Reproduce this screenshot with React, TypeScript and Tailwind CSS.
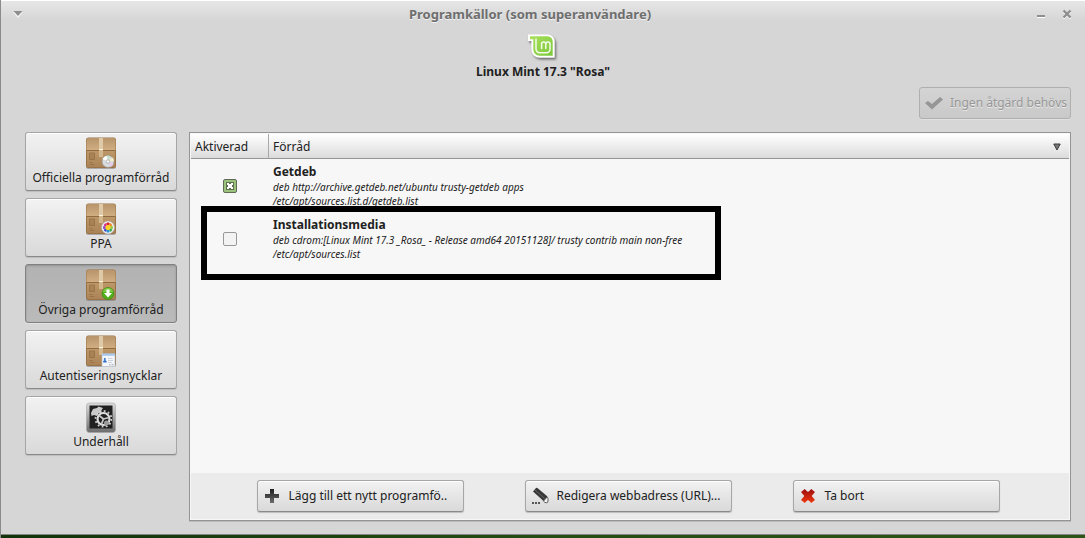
import { useState, type ReactNode } from 'react'
import clsx from 'clsx'

type Badge = 'disc' | 'ppa' | 'download' | 'card'

type Repository = {
  id: string
  name: string
  source: string
  file: string
  highlighted?: boolean
}

const TABS: { label: string; badge?: Badge }[] = [
  { label: 'Officiella programförråd', badge: 'disc' },
  { label: 'PPA', badge: 'ppa' },
  { label: 'Övriga programförråd', badge: 'download' },
  { label: 'Autentiseringsnycklar', badge: 'card' },
  { label: 'Underhåll' },
]

const REPOSITORIES: Repository[] = [
  {
    id: 'getdeb',
    name: 'Getdeb',
    source: 'deb http://archive.getdeb.net/ubuntu trusty-getdeb apps',
    file: '/etc/apt/sources.list.d/getdeb.list',
  },
  {
    id: 'cdrom',
    name: 'Installationsmedia',
    source: 'deb cdrom:[Linux Mint 17.3 _Rosa_ - Release amd64 20151128]/ trusty contrib main non-free',
    file: '/etc/apt/sources.list',
    highlighted: true,
  },
]

const PPA_COLORS = ['#d62b2b', '#ef8a1c', '#8cc63f', '#2fa84f', '#2b8fd6', '#3b4fc4', '#8a3bc4', '#d62b8a']

const RAISED =
  'rounded-[3px] border border-[#a6a6a6] border-b-[#8a8a8a] bg-linear-to-b from-[#f2f2f2] to-[#d9d9d9] shadow-[0_1px_1px_#bcbcbc,inset_0_1px_0_#ffffff]'

function MintLogo() {
  return (
    <svg width="32" height="32" viewBox="0 0 32 32" aria-hidden="true">
      <defs>
        <linearGradient id="mint" x1="0" y1="0" x2="1" y2="1">
          <stop offset="0" stopColor="#a9e05c" />
          <stop offset="1" stopColor="#7cc83c" />
        </linearGradient>
        <filter id="mint-shadow" x="-20%" y="-20%" width="150%" height="150%">
          <feDropShadow dx="1.500" dy="2" stdDeviation="1.200" floodColor="#000" floodOpacity="0.5" />
        </filter>
      </defs>
      <path
        filter="url(#mint-shadow)"
        fill="#fff"
        d="M1 3.500h19.500a7 7 0 0 1 7 7v16H12.500a8 8 0 0 1-8-8V10H1z"
      />
      <path fill="url(#mint)" d="M3 5.300h17.500a5.200 5.200 0 0 1 5.200 5.200v14.200H12.500a6.200 6.200 0 0 1-6.200-6.200V8.300H3z" />
      <path
        fill="none"
        stroke="#f4fbe9"
        strokeWidth="1.500"
        strokeLinecap="round"
        d="M9 8v10a3.700 3.700 0 0 0 3.700 3.700h6.800a3.500 3.500 0 0 0 3.500-3.500v-5a2.100 2.100 0 0 0-4.200 0V17.500M18.800 13.200a2.100 2.100 0 0 0-4.200 0V17.500"
      />
    </svg>
  )
}

function PackageBadge({ badge }: { badge: Badge }) {
  if (badge === 'disc') {
    return (
      <g>
        <circle cx="23" cy="24.500" r="6" fill="#d9dcdc" stroke="#8f8f8f" strokeWidth=".6" />
        <path d="M23 24.500 17.500 22a6 6 0 0 1 4-3.300z" fill="#fff" />
        <path d="M23 24.500 22 18.600a6 6 0 0 1 3 .3z" fill="#c5e3c8" />
        <path d="M23 24.500 28.500 27a6 6 0 0 1-3 2.900z" fill="#e6c9ea" />
        <path d="M23 24.500 29 24a6 6 0 0 0-1.500-3.500z" fill="#f4eec4" />
        <circle cx="23" cy="24.500" r="1.700" fill="#fff" stroke="#a5a5a5" strokeWidth=".8" />
      </g>
    )
  }
  if (badge === 'ppa') {
    return (
      <g>
        <circle cx="23" cy="24.500" r="6.500" fill="#eef0f2" stroke="#a9a9a9" strokeWidth=".5" />
        {PPA_COLORS.map((color, i) => (
          <path
            key={color}
            d="M21.500 20.300 22 19.600h2l.5.700-.5 2h-2z"
            fill={color}
            transform={`rotate(${i * 45} 23 24.500)`}
          />
        ))}
        <circle cx="23" cy="24.500" r="2.500" fill="#ffd21f" />
      </g>
    )
  }
  if (badge === 'download') {
    return (
      <g>
        <circle cx="23" cy="24.500" r="6" fill="#53ae1c" stroke="#3d8a12" strokeWidth=".7" />
        <path d="M17.800 23a5.400 5.400 0 0 1 10.400 0z" fill="#7dcc45" />
        <path d="M21.500 20.500h3V24H27l-4 4.500L19 24h2.500z" fill="#fff" />
      </g>
    )
  }
  return (
    <g>
      <path d="M17 19h13v12.500H17z" fill="#f3f6fa" stroke="#b9c3d1" strokeWidth=".6" />
      <path d="M17 18.500h13v2.300H17z" fill="#a9c8ee" />
      <circle cx="19.800" cy="24" r="1" fill="#2f6fc9" />
      <path d="M18.200 27.500v-1.300q1.600-2.200 3.300 0v1.300z" fill="#2f6fc9" />
      <path d="M23 23.500h4.500M23 25.500h5M23 27.500h4" stroke="#c4c8cf" strokeWidth=".8" />
      <path d="M24 29.800h5" stroke="#9ea3ab" strokeWidth="1" strokeDasharray="1 .5" />
    </g>
  )
}

function PackageIcon({ badge }: { badge: Badge }) {
  return (
    <svg width="32" height="32" viewBox="0 0 32 32" aria-hidden="true">
      <defs>
        <linearGradient id={`lid-${badge}`} x1="0" y1="0" x2="0" y2="1">
          <stop offset="0" stopColor="#b8946a" />
          <stop offset="1" stopColor="#d0ae82" />
        </linearGradient>
        <linearGradient id={`box-${badge}`} x1="0" y1="0" x2="0" y2="1">
          <stop offset="0" stopColor="#be9868" />
          <stop offset="1" stopColor="#ab8357" />
        </linearGradient>
      </defs>
      <rect x="1" y="1.500" width="30" height="30.500" rx="2.500" fill="#6f6f6f" opacity=".5" />
      <rect x="1" y=".5" width="30" height="30.500" rx="2.500" fill="#9a7448" />
      <path d="M3.500 1h25q2 0 2 1.500V13h-29V2.500Q1.500 1 3.500 1z" fill={`url(#lid-${badge})`} />
      <path d="M2 13.500h28v15q0 1.500-1.500 1.500h-25Q2 30 2 28.500z" fill={`url(#box-${badge})`} />
      <path d="M2 13.500h28" stroke="#8f6b42" />
      <path d="M14 1h4v11.500h-4z" fill="#dfc9a6" />
      <path d="M14 12.500h4v7.500h-4z" fill="#d3b88f" />
      <path d="M14 12.500h4" stroke="#fff4dc" />
      <path d="M4.500 22.500V16h5v6.500zM6 22v-5.500M8 22v-5.500" fill="none" stroke="#936c42" strokeWidth=".8" />
      <path d="M4.500 25.500h3M4.500 27.500h5" stroke="#936c42" strokeWidth=".7" />
      <PackageBadge badge={badge} />
    </svg>
  )
}

function MaintenanceIcon() {
  return (
    <svg width="32" height="32" viewBox="0 0 32 32" aria-hidden="true">
      <defs>
        <linearGradient id="frame" x1="0" y1="0" x2="0" y2="1">
          <stop offset="0" stopColor="#dcdcdc" />
          <stop offset="1" stopColor="#6c6c6c" />
        </linearGradient>
        <clipPath id="frame-clip">
          <path d="M5 4.500h22v22H5z" />
        </clipPath>
      </defs>
      <rect x="1.500" y="2" width="29" height="29.500" rx="3" fill="url(#frame)" stroke="#a5a5a5" strokeWidth=".6" />
      <path d="M4.500 4.500h23v23h-23z" fill="#202020" />
      <g clipPath="url(#frame-clip)" fill="none">
        <path fill="#c9c9c9" d="m6 12 2-4 4-1 1.500-1.500L18 7l-2 3 1 1.500-4 1-1 2.500-3-1-2.500 1z" />
        <circle cx="18.500" cy="18" r="6" stroke="#dedede" strokeWidth="2.200" />
        <circle cx="18.500" cy="18" r="8" stroke="#d0d0d0" strokeWidth="1.800" strokeDasharray="1.800 2.390" />
        <path d="m18.500 18-4.500-3.500M18.500 18l5.500-1.500M18.500 18l-2 5" stroke="#c6c6c6" strokeWidth="1.800" />
        <circle cx="21.500" cy="22" r="2.500" fill="#9c9c9c" />
      </g>
    </svg>
  )
}

function PlusIcon() {
  return (
    <svg width="16" height="16" viewBox="0 0 16 16" aria-hidden="true">
      <defs>
        <linearGradient id="plus" x1="0" y1="0" x2="0" y2="1">
          <stop offset="0" stopColor="#1c1c1c" />
          <stop offset="1" stopColor="#6c6c6c" />
        </linearGradient>
      </defs>
      <path fill="url(#plus)" d="M6 1h4v5h5v4h-5v5H6v-5H1V6h5z" />
    </svg>
  )
}

function PencilIcon() {
  return (
    <svg width="18" height="18" viewBox="0 0 18 18" aria-hidden="true">
      <path fill="#383838" d="M1 4.500 4 1Q5 .5 6 1.500L15.500 9.500 11.500 14z" />
      <path stroke="#777" strokeWidth=".7" d="m3 3 9.500 8.500" />
      <path fill="#f6f6f6" stroke="#4a4a4a" strokeWidth=".9" d="M11.500 14.200 15 10q1.500 1 1 4 0 1.800-1.500 1.800-1.800 0-3-1.600z" />
      <path fill="#555" d="M0 15h2v2H0zm3 0h2v2H3zm3 0h2v2H6z" />
    </svg>
  )
}

function DeleteIcon() {
  return (
    <svg width="16" height="16" viewBox="0 0 16 16" aria-hidden="true">
      <defs>
        <linearGradient id="delete" x1="0" y1="0" x2="0" y2="1">
          <stop offset="0" stopColor="#9c0b0b" />
          <stop offset="1" stopColor="#f03a10" />
        </linearGradient>
      </defs>
      <path
        fill="url(#delete)"
        d="M4.500 1 8 4l3.500-3L13 2.500l2 1.500-3.300 4L15 12l-2 1.500-1.500 1.500L8 12l-3.500 3L3 13.500 1 12l3.300-4L1 4l2-1.500z"
      />
    </svg>
  )
}

function TitleBar() {
  return (
    <header className="flex h-[27px] items-center border-t border-white bg-linear-to-b from-[#e6e6e6] to-[#d6d6d6] to-75% pr-[13px] pl-[11px]">
      <button type="button" aria-label="Fönstermeny" className="w-12">
        <svg width="12" height="8" viewBox="0 0 12 8" aria-hidden="true">
          <path fill="#f4f4f4" d="M1 2h10L6 8z" />
          <path fill="#8e8e8e" d="M1.500 1h9L6 6z" />
        </svg>
      </button>
      <h1 className="flex-1 text-center text-[13px] leading-4 font-bold text-[#6e6e6e] [text-shadow:0_1px_0_#f2f2f2]">
        Programkällor (som superanvändare)
      </h1>
      <div className="flex w-[72px] items-center justify-end gap-4">
        <button type="button" aria-label="Minimera">
          <svg width="10" height="10" viewBox="0 0 10 10" aria-hidden="true">
            <path fill="#fff" d="M1 8h8v1H1z" />
            <path fill="#8e8e8e" d="M1 6h8v2H1z" />
          </svg>
        </button>
        <button type="button" aria-label="Stäng">
          <svg width="10" height="10" viewBox="0 0 10 10" fill="none" strokeWidth="2.400" aria-hidden="true">
            <path stroke="#f6f6f6" d="m1.500 2.500 7 7m0-7-7 7" />
            <path stroke="#8e8e8e" d="m1.500 1.500 7 7m0-7-7 7" />
          </svg>
        </button>
      </div>
    </header>
  )
}

function ActionButton({ icon, children }: { icon: ReactNode; children: ReactNode }) {
  return (
    <button type="button" className={clsx(RAISED, 'flex h-8 w-[207px] items-center px-1.5 whitespace-nowrap')}>
      <span className="w-[25px]">{icon}</span>
      {children}
    </button>
  )
}

function RepositoryRow({ repo, enabled, onToggle }: { repo: Repository; enabled: boolean; onToggle: () => void }) {
  return (
    <tr className="relative">
      <td className="py-1">
        <div className="relative mx-auto size-3.5">
          <input
            id={repo.id}
            type="checkbox"
            checked={enabled}
            onChange={onToggle}
            className="block size-3.5 appearance-none rounded-[2px] border border-[#999999] bg-[#f3f3f3] checked:border-[#5f6b55] checked:bg-[#9bc37c]"
          />
          {enabled && (
            <svg className="pointer-events-none absolute inset-0" width="14" height="14" viewBox="0 0 14 14" aria-hidden="true">
              <path fill="#5f7350" d="M3 3h8v8H3z" />
              <path fill="#fff" d="M4 4h2v1h2V4h2v2H9v2h1v2H8V9H6v1H4V8h1V6H4z" />
            </svg>
          )}
        </div>
      </td>
      <td className="px-1 py-1">
        <label htmlFor={repo.id} className="block leading-[17px] font-bold">
          {repo.name}
        </label>
        <p className="text-[10px] leading-[14px] italic">{repo.source}</p>
        <p className="text-[10px] leading-[14px] italic">{repo.file}</p>
        {repo.highlighted && (
          <div className="pointer-events-none absolute -top-1.5 left-2.5 h-[74px] w-[520px] border-6 border-black" />
        )}
      </td>
    </tr>
  )
}

export default function App() {
  const [tab, setTab] = useState(2)
  const [enabled, setEnabled] = useState<string[]>(['getdeb'])

  const toggle = (id: string) =>
    setEnabled((ids) => (ids.includes(id) ? ids.filter((other) => other !== id) : [...ids, id]))

  return (
    <div className="flex min-h-screen flex-col border-l border-[#8b8b8b] bg-[#d6d6d6] font-['Noto_Sans',sans-serif] text-xs text-[#212121]">
      <TitleBar />

      <div className="flex flex-col items-center pt-1">
        <MintLogo />
        <h2 className="leading-[18px] font-bold">Linux Mint 17.3 "Rosa"</h2>
      </div>

      <div className="flex justify-end px-3.5 pt-1.5">
        <button
          type="button"
          disabled
          className="flex h-8 items-center gap-[7px] rounded-[3px] border border-[#afafaf] bg-linear-to-b from-[#d4d4d4] to-[#c9c9c9] px-[3px] whitespace-nowrap text-[#979797] shadow-[0_1px_0_#e0e0e0] [text-shadow:0_1px_0_#e8e8e8]"
        >
          <svg width="20" height="16" viewBox="0 0 20 16" aria-hidden="true">
            <path fill="#969696" d="m2 8 3-2 4 3 8-7 3 2.500L9 14.500z" />
          </svg>
          Ingen åtgärd behövs
        </button>
      </div>

      <div className="flex flex-1 gap-3 pt-[13px] pr-3.5 pb-[13px] pl-6">
        <nav className="flex w-[152px] shrink-0 flex-col gap-[7px]">
          {TABS.map(({ label, badge }, i) => (
            <button
              key={label}
              type="button"
              aria-pressed={tab === i}
              onClick={() => setTab(i)}
              className={clsx(
                'flex h-[59px] flex-col items-center pt-1 leading-[18px] whitespace-nowrap',
                tab === i
                  ? 'rounded-[3px] border border-[#808080] bg-linear-to-b from-[#b2b2b2] to-[#bababa] shadow-[0_1px_0_#e2e2e2,inset_0_1px_2px_#929292]'
                  : RAISED,
              )}
            >
              {badge ? <PackageIcon badge={badge} /> : <MaintenanceIcon />}
              {label}
            </button>
          ))}
        </nav>

        <main className="flex min-w-0 flex-1 flex-col border border-[#949494] bg-[#f7f7f7] p-px shadow-[0_1px_0_#bcbcbc]">
          <table className="w-full table-fixed border-separate border-spacing-0">
            <thead>
              <tr className="h-[25px] bg-linear-to-b from-white to-[#dadada] text-left">
                <th className="w-[78px] border-r border-b border-r-[#a8a8a8] border-b-[#969696] px-1 pt-px font-normal">
                  Aktiverad
                </th>
                <th className="border-b border-[#969696] px-1 pt-px font-normal">
                  <button type="button" className="flex w-full items-center justify-between pr-1">
                    Förråd
                    <svg width="8" height="8" viewBox="0 0 8 8" aria-hidden="true">
                      <path fill="#777" stroke="#3c3c3c" d="M.8 1h6.400L4 7z" />
                    </svg>
                  </button>
                </th>
              </tr>
            </thead>
            <tbody>
              {REPOSITORIES.map((repo) => (
                <RepositoryRow
                  key={repo.id}
                  repo={repo}
                  enabled={enabled.includes(repo.id)}
                  onToggle={() => toggle(repo.id)}
                />
              ))}
            </tbody>
          </table>

          <div className="mt-auto flex h-[46px] items-center justify-center gap-[61px] bg-[#ebebeb] pr-1">
            <ActionButton icon={<PlusIcon />}>Lägg till ett nytt programfö..</ActionButton>
            <ActionButton icon={<PencilIcon />}>Redigera webbadress (URL)...</ActionButton>
            <ActionButton icon={<DeleteIcon />}>Ta bort</ActionButton>
          </div>
        </main>
      </div>

      <footer className="h-1 border-t border-[#858585] bg-linear-to-r from-[#12330a] via-[#234d12] to-[#2c5416]" />
    </div>
  )
}
